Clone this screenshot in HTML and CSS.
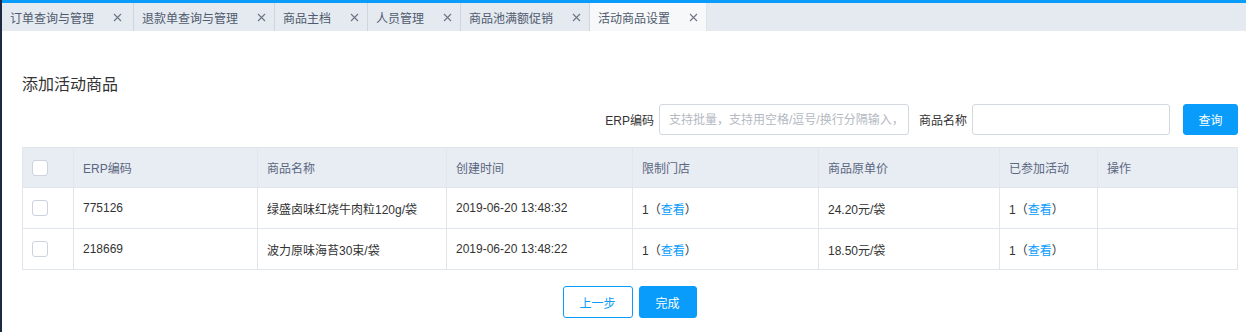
FILE: index.html
```html
<!DOCTYPE html>
<html lang="zh-CN">
<head>
  <meta charset="UTF-8" />
  <title>活动商品设置</title>
  <link rel="stylesheet" href="styles.css">
</head>
<body>
  <div class="sidebar"></div>
  <div class="main">
    <div class="topline"></div>
    <div class="tabs">
      <div class="tab first"><span>订单查询与管理</span><svg class="close" viewBox="0 0 9 9"><path d="M1 1L8 8M8 1L1 8"/></svg></div>
      <div class="tab"><span>退款单查询与管理</span><svg class="close" viewBox="0 0 9 9"><path d="M1 1L8 8M8 1L1 8"/></svg></div>
      <div class="tab"><span>商品主档</span><svg class="close" viewBox="0 0 9 9"><path d="M1 1L8 8M8 1L1 8"/></svg></div>
      <div class="tab"><span>人员管理</span><svg class="close" viewBox="0 0 9 9"><path d="M1 1L8 8M8 1L1 8"/></svg></div>
      <div class="tab"><span>商品池满额促销</span><svg class="close" viewBox="0 0 9 9"><path d="M1 1L8 8M8 1L1 8"/></svg></div>
      <div class="tab active"><span>活动商品设置</span><svg class="close" viewBox="0 0 9 9"><path d="M1 1L8 8M8 1L1 8"/></svg></div>
    </div>

    <div class="content">
      <h2 class="title">添加活动商品</h2>

      <div class="search">
        <label>ERP编码</label>
        <input class="erp-input" type="text" placeholder="支持批量，支持用空格/逗号/换行分隔输入，" />
        <label>商品名称</label>
        <input class="name-input" type="text" />
        <button class="btn primary query">查询</button>
      </div>

      <table class="grid">
        <colgroup>
          <col style="width:51px">
          <col style="width:184px">
          <col style="width:189px">
          <col style="width:186px">
          <col style="width:186px">
          <col style="width:181px">
          <col style="width:98px">
          <col style="width:140px">
        </colgroup>
        <thead>
          <tr>
            <th><span class="check"></span></th>
            <th>ERP编码</th>
            <th>商品名称</th>
            <th>创建时间</th>
            <th>限制门店</th>
            <th>商品原单价</th>
            <th>已参加活动</th>
            <th>操作</th>
          </tr>
        </thead>
        <tbody>
          <tr>
            <td><span class="check"></span></td>
            <td>775126</td>
            <td>绿盛卤味红烧牛肉粒120g/袋</td>
            <td>2019-06-20 13:48:32</td>
            <td>1（<a href="#">查看</a>）</td>
            <td>24.20元/袋</td>
            <td>1（<a href="#">查看</a>）</td>
            <td></td>
          </tr>
          <tr>
            <td><span class="check"></span></td>
            <td>218669</td>
            <td>波力原味海苔30束/袋</td>
            <td>2019-06-20 13:48:22</td>
            <td>1（<a href="#">查看</a>）</td>
            <td>18.50元/袋</td>
            <td>1（<a href="#">查看</a>）</td>
            <td></td>
          </tr>
        </tbody>
      </table>

      <div class="actions">
        <button class="btn ghost">上一步</button>
        <button class="btn primary">完成</button>
      </div>
    </div>
  </div>
</body>
</html>
```

FILE: styles.css
```css
* {
  margin: 0;
  padding: 0;
  box-sizing: border-box;
  font-family: 'Liberation Sans', 'Noto Sans CJK SC', sans-serif;
}

body {
  display: flex;
  width: 1246px;
  height: 332px;
  overflow: hidden;
  background: #fff;
  font-size: 12px;
  color: #333;
}

.sidebar {
  width: 3px;
  background: #1c2940;
}

.main {
  flex: 1;
  display: flex;
  flex-direction: column;
}

.topline {
  height: 3px;
  background: #0a9cfb;
}

.tabs {
  display: flex;
  height: 28px;
  background: #e5e9f0;
}

.tab {
  display: flex;
  align-items: center;
  padding: 0 8px;
  border-right: 1px solid #d0d5dd;
  color: #4f5b6e;
  font-size: 12px;
}

.tab.first {
  padding-right: 11px;
}

.tab span {
  margin-right: 19px;
}

.tab.active {
  background: #f7f8fa;
  border-right-color: #dfe3ea;
}

.close {
  width: 9px;
  height: 9px;
  stroke: #6b7585;
  stroke-width: 1.1;
  fill: none;
}

.content {
  padding: 43px 8px 0 20px;
}

.title {
  font-size: 16px;
  font-weight: normal;
  line-height: 22px;
  color: #333;
}

.search {
  display: flex;
  justify-content: flex-end;
  align-items: center;
  margin-top: 8px;
  height: 31px;
}

.search label {
  color: #333;
  margin-right: 5px;
}

.search input {
  height: 31px;
  border: 1px solid #d3d8e0;
  border-radius: 3px;
  padding: 0 9px;
  font-size: 12px;
  outline: none;
  color: #333;
}

.search input::placeholder {
  color: #b4b9c2;
}

.erp-input {
  width: 250px;
  margin-right: 10px;
}

.name-input {
  width: 198px;
}

.btn {
  height: 32px;
  border-radius: 3px;
  font-size: 12px;
  cursor: pointer;
}

.btn.primary {
  background: #0a9cfb;
  border: 1px solid #0a9cfb;
  color: #fff;
}

.btn.ghost {
  background: #fff;
  border: 1px solid #0a9cfb;
  color: #0a9cfb;
}

.query {
  width: 55px;
  height: 31px;
  margin-left: 13px;
}

.grid {
  width: 1215px;
  margin-top: 12px;
  border-collapse: collapse;
  table-layout: fixed;
}

.grid th,
.grid td {
  border: 1px solid #e1e5ec;
  text-align: left;
  padding: 0 9px;
  font-weight: normal;
  white-space: nowrap;
}

.grid th {
  height: 40px;
  background: #e8ecf3;
  color: #5a6780;
}

.grid td {
  height: 41px;
  color: #333;
}

.grid a {
  color: #0a9cfb;
  text-decoration: none;
}

.check {
  display: block;
  width: 16px;
  height: 16px;
  border: 1px solid #cdd3dc;
  border-radius: 3px;
  background: #fff;
}

.actions {
  display: flex;
  justify-content: center;
  gap: 6px;
  width: 1215px;
  margin-top: 16px;
}

.actions .ghost {
  width: 70px;
}

.actions .primary {
  width: 58px;
}
```
